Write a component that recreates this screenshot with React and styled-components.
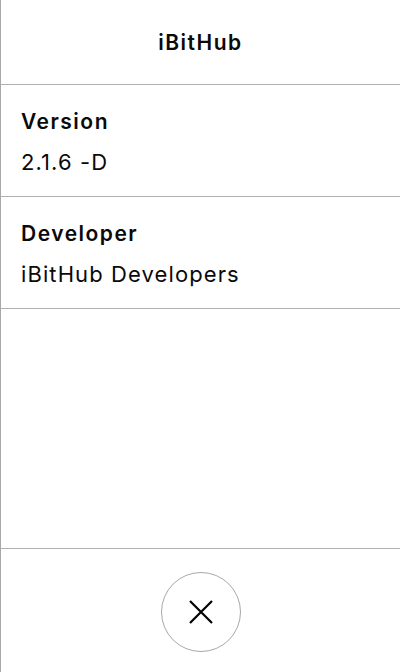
import React from 'react';
import styled, { createGlobalStyle } from 'styled-components';

const GlobalStyle = createGlobalStyle`
  html, body {
    margin: 0;
    padding: 0;
    height: 100%;
    background: #ffffff;
  }
  #root {
    height: 100%;
  }
  * {
    box-sizing: border-box;
  }
`;

const Panel = styled.div`
  display: flex;
  flex-direction: column;
  height: 100vh;
  border-left: 1px solid #a8a8a8;
  font-family: Inter, "Noto Sans", sans-serif;
  color: #0a0a0a;
`;

const Header = styled.header`
  height: 85px;
  display: flex;
  align-items: center;
  justify-content: center;
  padding-top: 1px;
  border-bottom: 1px solid #b0b0b0;
  font-size: 21px;
  font-weight: 600;
  letter-spacing: 1.5px;
`;

const Section = styled.section`
  display: flex;
  flex-direction: column;
  gap: 10px;
  padding: 22px 20px 19px;
  border-bottom: 1px solid #b0b0b0;
`;

const Label = styled.div`
  font-size: 21px;
  line-height: 30px;
  font-weight: 600;
  letter-spacing: 1.5px;
`;

const Value = styled.div`
  font-size: 22px;
  line-height: 30px;
  font-weight: 400;
  letter-spacing: 1.1px;
`;

const Spacer = styled.div`
  flex: 1;
  border-bottom: 1px solid #b0b0b0;
`;

const Footer = styled.footer`
  display: flex;
  justify-content: center;
  padding: 23px 0 20px;
`;

const CloseButton = styled.button`
  width: 80px;
  height: 80px;
  border-radius: 50%;
  border: 1.5px solid #a8a8a8;
  background: #ffffff;
  display: flex;
  align-items: center;
  justify-content: center;
  padding: 0;
  cursor: pointer;
`;

const info = [
  { label: 'Version', value: '2.1.6 -D' },
  { label: 'Developer', value: 'iBitHub Developers' },
];

export default function App() {
  return (
    <>
      <GlobalStyle />
      <Panel>
        <Header>iBitHub</Header>
        {info.map((item) => (
          <Section key={item.label}>
            <Label>{item.label}</Label>
            <Value>{item.value}</Value>
          </Section>
        ))}
        <Spacer />
        <Footer>
          <CloseButton aria-label="Close">
            <svg width="24" height="24" viewBox="0 0 24 24" fill="none" stroke="#000" strokeWidth="2.2">
              <path d="M1 1 L23 23 M23 1 L1 23" />
            </svg>
          </CloseButton>
        </Footer>
      </Panel>
    </>
  );
}
